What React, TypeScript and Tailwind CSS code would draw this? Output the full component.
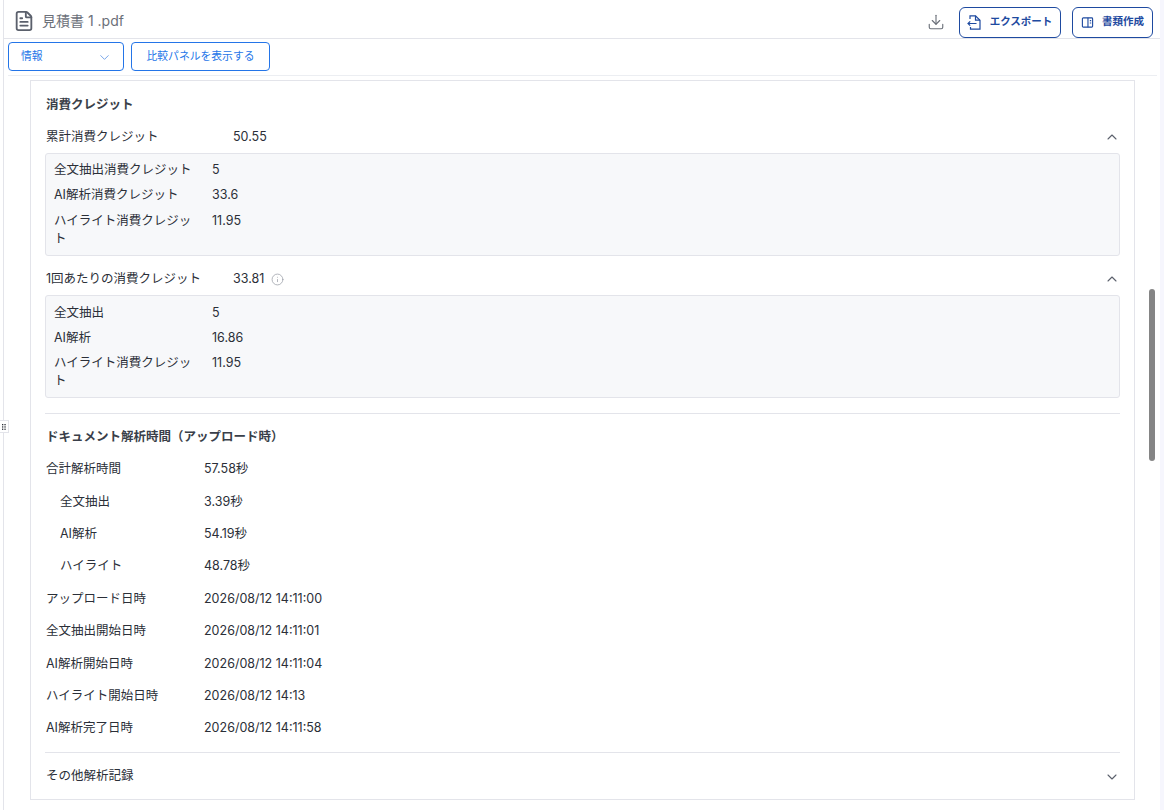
import { ChevronDown, ChevronUp, Download, FileText, Info } from "lucide-react"

const totalRows = [
  { label: "全文抽出消費クレジット", value: "5", h: "h-[25px]" },
  { label: "AI解析消費クレジット", value: "33.6", h: "h-[26px]" },
  { label: "ハイライト消費クレジット", value: "11.95", h: "h-[36px]" },
]

const perRunRows = [
  { label: "全文抽出", value: "5", h: "h-[25px]" },
  { label: "AI解析", value: "16.86", h: "h-[25px]" },
  { label: "ハイライト消費クレジット", value: "11.95", h: "h-[36px]" },
]

const timeRows = [
  { label: "合計解析時間", value: "57.58秒", indent: false },
  { label: "全文抽出", value: "3.39秒", indent: true },
  { label: "AI解析", value: "54.19秒", indent: true },
  { label: "ハイライト", value: "48.78秒", indent: true },
  { label: "アップロード日時", value: "2026/08/12 14:11:00", indent: false },
  { label: "全文抽出開始日時", value: "2026/08/12 14:11:01", indent: false },
  { label: "AI解析開始日時", value: "2026/08/12 14:11:04", indent: false },
  { label: "ハイライト開始日時", value: "2026/08/12 14:13", indent: false },
  { label: "AI解析完了日時", value: "2026/08/12 14:11:58", indent: false },
]

function CreditBox({ rows, top }: { rows: { label: string; value: string; h: string }[]; top: string }) {
  return (
    <div className={`-mx-px h-[103px] rounded-[3px] border border-[#e3e4ea] bg-[#f7f8fa] pl-2 ${top}`}>
      {rows.map((row) => (
        <div key={row.label} className={`flex ${row.h} pt-[3px] leading-[18px]`}>
          <div className="w-[158px] break-all pr-5">{row.label}</div>
          <div>{row.value}</div>
        </div>
      ))}
    </div>
  )
}

export default function App() {
  return (
    <div className="relative flex h-[810px] overflow-hidden bg-white font-['Inter','Noto_Sans_CJK_JP',sans-serif] text-[12.5px] text-[#2b2f38]">
      <div className="w-[4px] shrink-0 border-r border-[#e3e4ea]" />

      <div className="min-w-0 flex-1">
        {/* Top bar */}
        <header className="flex h-[39px] items-center border-b border-[#e3e4ea] pl-[9px] pr-[7px]">
          <FileText className="mt-[3px] h-[22px] w-[22px] text-[#5b606c]" strokeWidth={2} />
          <span className="ml-[7px] pt-[2px] text-[14px] text-[#6b7079]">見積書 1 .pdf</span>
          <div className="ml-auto flex items-center pt-[6px]">
            <Download className="mr-[14px] h-[18px] w-[18px] text-[#6b7079]" strokeWidth={1.5} />
            <button className="flex h-[31px] w-[102px] items-center justify-center gap-[8px] rounded-[6px] border border-[#1e4aa0] pr-[1px] text-[10.5px] font-semibold text-[#1e4aa0]">
              <svg viewBox="0 0 15 15" className="h-[15px] w-[15px]" fill="none" stroke="currentColor" strokeWidth="1.2">
                <path d="M3 4V.8h5.5L13 5.2v9H3.5V12" />
                <path d="M8.5.8v4.4H13" />
                <path d="M9.5 8.5H1M3.2 6.3 1 8.5l2.2 2.2" />
              </svg>
              エクスポート
            </button>
            <button className="ml-[11px] flex h-[31px] w-[81px] items-center justify-center gap-[8px] rounded-[6px] border border-[#1e4aa0] text-[10.5px] font-semibold text-[#1e4aa0]">
              <svg viewBox="0 0 14 14" className="h-[13px] w-[13px]" fill="none" stroke="currentColor" strokeWidth="1.2">
                <rect x="1.5" y="2" width="11" height="10" rx="1" />
                <path d="M7.5 2v10M9.5 5h1.5M9.5 7.5h1.5" />
              </svg>
              書類作成
            </button>
          </div>
        </header>

        {/* Panel controls */}
        <div className="ml-[4px] mr-[3px] flex h-[37px] items-center gap-[7px] border-b border-[#eceef2] pb-[3px] pt-[2px]">
          <button className="flex h-[29px] w-[116px] items-center justify-between rounded-[4px] border border-[#2475e8] pl-[12px] pr-[11px] pt-px text-[10.8px] text-[#2475e8]">
            情報
            <ChevronDown className="h-[15px] w-[15px] text-[#6f9fe8]" strokeWidth={1.5} />
          </button>
          <button className="h-[29px] w-[139px] rounded-[4px] border border-[#2475e8] pt-px text-[10.8px] text-[#2475e8]">
            比較パネルを表示する
          </button>
        </div>

        {/* Info card */}
        <section className="ml-[26px] mt-[4px] h-[720px] w-[1105px] border border-[#e3e4ea] px-[15px]">
          <h2 className="flex h-[46px] items-center pt-[3px] font-bold text-[#3a3f4a]">消費クレジット</h2>

          <div className="flex h-[26px] items-center pb-[6px]">
            <span className="w-[187px]">累計消費クレジット</span>
            <span>50.55</span>
            <ChevronUp className="-mr-px ml-auto h-[16px] w-[16px] text-[#5b606c]" strokeWidth={1.6} />
          </div>
          <CreditBox rows={totalRows} top="pt-[4px]" />

          <div className="mt-[10px] flex h-[29px] items-center pb-[3px]">
            <span className="w-[187px]">1回あたりの消費クレジット</span>
            <span>33.81</span>
            <Info className="ml-[7px] h-[13px] w-[13px] text-[#9a9ea8]" strokeWidth={1.4} />
            <ChevronUp className="-mr-px ml-auto h-[16px] w-[16px] text-[#5b606c]" strokeWidth={1.6} />
          </div>
          <CreditBox rows={perRunRows} top="pt-[5px]" />

          <div className="-mx-px mt-[15px] border-t border-[#e3e4ea]" />
          <h2 className="flex h-[45px] items-center pt-[2px] font-bold text-[#3a3f4a]">ドキュメント解析時間（アップロード時）</h2>

          <div className="-mt-[5.6px]">
            {timeRows.map((row) => (
              <div key={row.label + row.value} className="flex h-[32.4px] items-center">
                <span className={row.indent ? "w-[158px] pl-[14px]" : "w-[158px]"}>{row.label}</span>
                <span>{row.value}</span>
              </div>
            ))}
          </div>

          <div className="-mx-px mt-[6.6px] flex h-[47px] items-center border-t border-[#e3e4ea] pl-px pt-[2px]">
            <span>その他解析記録</span>
            <ChevronDown className="ml-auto h-[16px] w-[16px] text-[#5b606c]" strokeWidth={1.6} />
          </div>
        </section>
      </div>

      <div className="w-[4px] shrink-0 bg-[#f6f6fd]" />

      {/* Overlays */}
      <div className="absolute left-[1149px] top-[289px] h-[172px] w-[6px] rounded-full bg-[#858585]" />
      <div className="absolute left-0 top-[420px] flex h-[13px] w-[9px] items-center justify-center border border-l-0 border-[#e3e4ea] bg-white">
        <svg viewBox="0 0 4 6" className="h-[6px] w-[4px] fill-[#2b2f38]">
          <rect x="0" y="0" width="1.3" height="1.3" />
          <rect x="2.4" y="0" width="1.3" height="1.3" />
          <rect x="0" y="2.3" width="1.3" height="1.3" />
          <rect x="2.4" y="2.3" width="1.3" height="1.3" />
          <rect x="0" y="4.6" width="1.3" height="1.3" />
          <rect x="2.4" y="4.6" width="1.3" height="1.3" />
        </svg>
      </div>
    </div>
  )
}
